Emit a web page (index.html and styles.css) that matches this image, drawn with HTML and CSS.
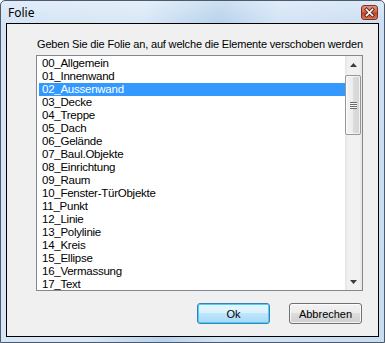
FILE: index.html
```html
<html>

<head>
  <meta content="text/html;charset=utf-8" http-equiv="Content-Type" />
  <link rel="stylesheet" href="styles.css">
</head>

<body>
  <div class="window">
    <div class="titlebar">
      <span class="title">Folie</span>
      <div class="spacer"></div>
      <div class="close" title="Schließen">
        <svg width="15" height="13" viewBox="0 0 15 13">
          <path d="M4.5 3.5 L10.5 9.5 M10.5 3.5 L4.5 9.5" stroke="#5b2a22" stroke-width="3.4" stroke-linecap="square" fill="none" />
          <path d="M4.5 3.5 L10.5 9.5 M10.5 3.5 L4.5 9.5" stroke="#ffffff" stroke-width="1.6" stroke-linecap="square" fill="none" />
        </svg>
      </div>
    </div>

    <div class="client">
      <p class="prompt">Geben Sie die Folie an, auf welche die Elemente verschoben werden</p>

      <div class="listbox">
        <ul class="items">
          <li>00_Allgemein</li>
          <li>01_Innenwand</li>
          <li class="selected">02_Aussenwand</li>
          <li>03_Decke</li>
          <li>04_Treppe</li>
          <li>05_Dach</li>
          <li>06_Gelände</li>
          <li>07_Baul.Objekte</li>
          <li>08_Einrichtung</li>
          <li>09_Raum</li>
          <li>10_Fenster-TürObjekte</li>
          <li>11_Punkt</li>
          <li>12_Linie</li>
          <li>13_Polylinie</li>
          <li>14_Kreis</li>
          <li>15_Ellipse</li>
          <li>16_Vermassung</li>
          <li>17_Text</li>
        </ul>
        <div class="scrollbar">
          <div class="arrow">
            <svg width="7" height="4" viewBox="0 0 7 4"><polygon points="3.5,0 7,4 0,4" fill="#3d3d3d" /></svg>
          </div>
          <div class="track">
            <div class="thumb"><span class="grip"></span></div>
          </div>
          <div class="arrow">
            <svg width="7" height="4" viewBox="0 0 7 4"><polygon points="0,0 7,0 3.5,4" fill="#3d3d3d" /></svg>
          </div>
        </div>
      </div>

      <div class="actions">
        <button class="btn default">Ok</button>
        <button class="btn">Abbrechen</button>
      </div>
    </div>
  </div>
</body>

</html>
```

FILE: styles.css
```css
html {
  margin: 0;
  font-family: "Liberation Sans", Arial, sans-serif;
  font-size: 11px;
}

body {
  margin: 0;
  background: #ffffff;
}

.window {
  width: 385px;
  height: 343px;
  box-sizing: border-box;
  display: flex;
  flex-direction: column;
  padding: 0 5px 5px 5px;
  border: 1px solid #4b5b6d;
  border-radius: 5px 5px 0 0;
  background:
    linear-gradient(to bottom, rgba(255, 255, 255, 0.3), rgba(255, 255, 255, 0) 22px),
    linear-gradient(100deg, #d4e4f5 0%, #d9e8f6 32%, #b8d2ec 50%, #d3e4f5 63%, #c8dcf1 100%);
}

.titlebar {
  height: 22px;
  display: flex;
  align-items: center;
}

.titlebar .title {
  padding-left: 2px;
  font-family: "Noto Sans", sans-serif;
  font-size: 12px;
  color: #000;
}

.titlebar .spacer {
  flex-grow: 1;
}

.close {
  width: 17px;
  height: 15px;
  box-sizing: border-box;
  margin: 1px 1px 0 0;
  display: flex;
  align-items: center;
  justify-content: center;
  border: 1px solid #7a3426;
  border-radius: 3px;
  background: linear-gradient(to bottom, #e8917b 0%, #d9644a 45%, #c2401f 55%, #e07a55 100%);
}

.client {
  flex-grow: 1;
  display: flex;
  flex-direction: column;
  padding: 14px 15px 0 29px;
  border: 1px solid #000;
  background: #f0f0f0;
}

.prompt {
  margin: 0 0 4px 1px;
  line-height: 13px;
  letter-spacing: -0.17px;
  white-space: nowrap;
  color: #000;
}

.listbox {
  height: 236px;
  box-sizing: border-box;
  display: flex;
  border: 1px solid #828790;
  background: #fff;
}

.items {
  flex-grow: 1;
  margin: 0;
  padding: 1px 0 0 2px;
  list-style: none;
  overflow: hidden;
}

.items li {
  height: 13px;
  line-height: 13px;
  padding-left: 3px;
  font-size: 11.5px;
  letter-spacing: -0.25px;
  white-space: nowrap;
  color: #000;
}

.items li.selected {
  background: #3399ff;
  color: #fff;
}

.scrollbar {
  width: 17px;
  display: flex;
  flex-direction: column;
  background: linear-gradient(to right, #e4e4e4 0, #f1f1f1 3px, #f1f1f1 14px, #e6e6e6 100%);
}

.scrollbar .arrow {
  height: 17px;
  display: flex;
  align-items: center;
  justify-content: center;
}

.scrollbar .track {
  flex-grow: 1;
  padding-top: 2px;
}

.thumb {
  height: 60px;
  box-sizing: border-box;
  margin: 0 1px 0 0;
  display: flex;
  align-items: center;
  justify-content: center;
  border: 1px solid #979797;
  border-radius: 2px;
  background: linear-gradient(to right, #f4f4f4 0%, #ececec 50%, #dcdcdc 51%, #d4d4d4 100%);
  box-shadow: inset 0 0 0 1px rgba(255, 255, 255, 0.7);
}

.grip {
  width: 7px;
  height: 7px;
  background: repeating-linear-gradient(to bottom, #6a6a6a 0, #6a6a6a 1px, #f7f7f7 1px, #f7f7f7 2px);
}

.actions {
  display: flex;
  justify-content: flex-end;
  gap: 19px;
  margin: 12px 1px 0 0;
}

.btn {
  width: 73px;
  height: 21px;
  padding: 0;
  font-family: "Liberation Sans", Arial, sans-serif;
  font-size: 11px;
  color: #000;
  border: 1px solid #707070;
  border-radius: 3px;
  background: linear-gradient(to bottom, #f2f2f2 0%, #ebebeb 50%, #dddddd 50%, #cfcfcf 100%);
  box-shadow: inset 0 0 0 1px rgba(255, 255, 255, 0.75);
}

.btn.default {
  border-color: #3c7fb1;
  background: linear-gradient(to bottom, #eaf6fd 0%, #d9f0fc 50%, #bee6fd 50%, #a7d9f5 100%);
  box-shadow: inset 0 0 0 1px #48d1fd;
}
```
